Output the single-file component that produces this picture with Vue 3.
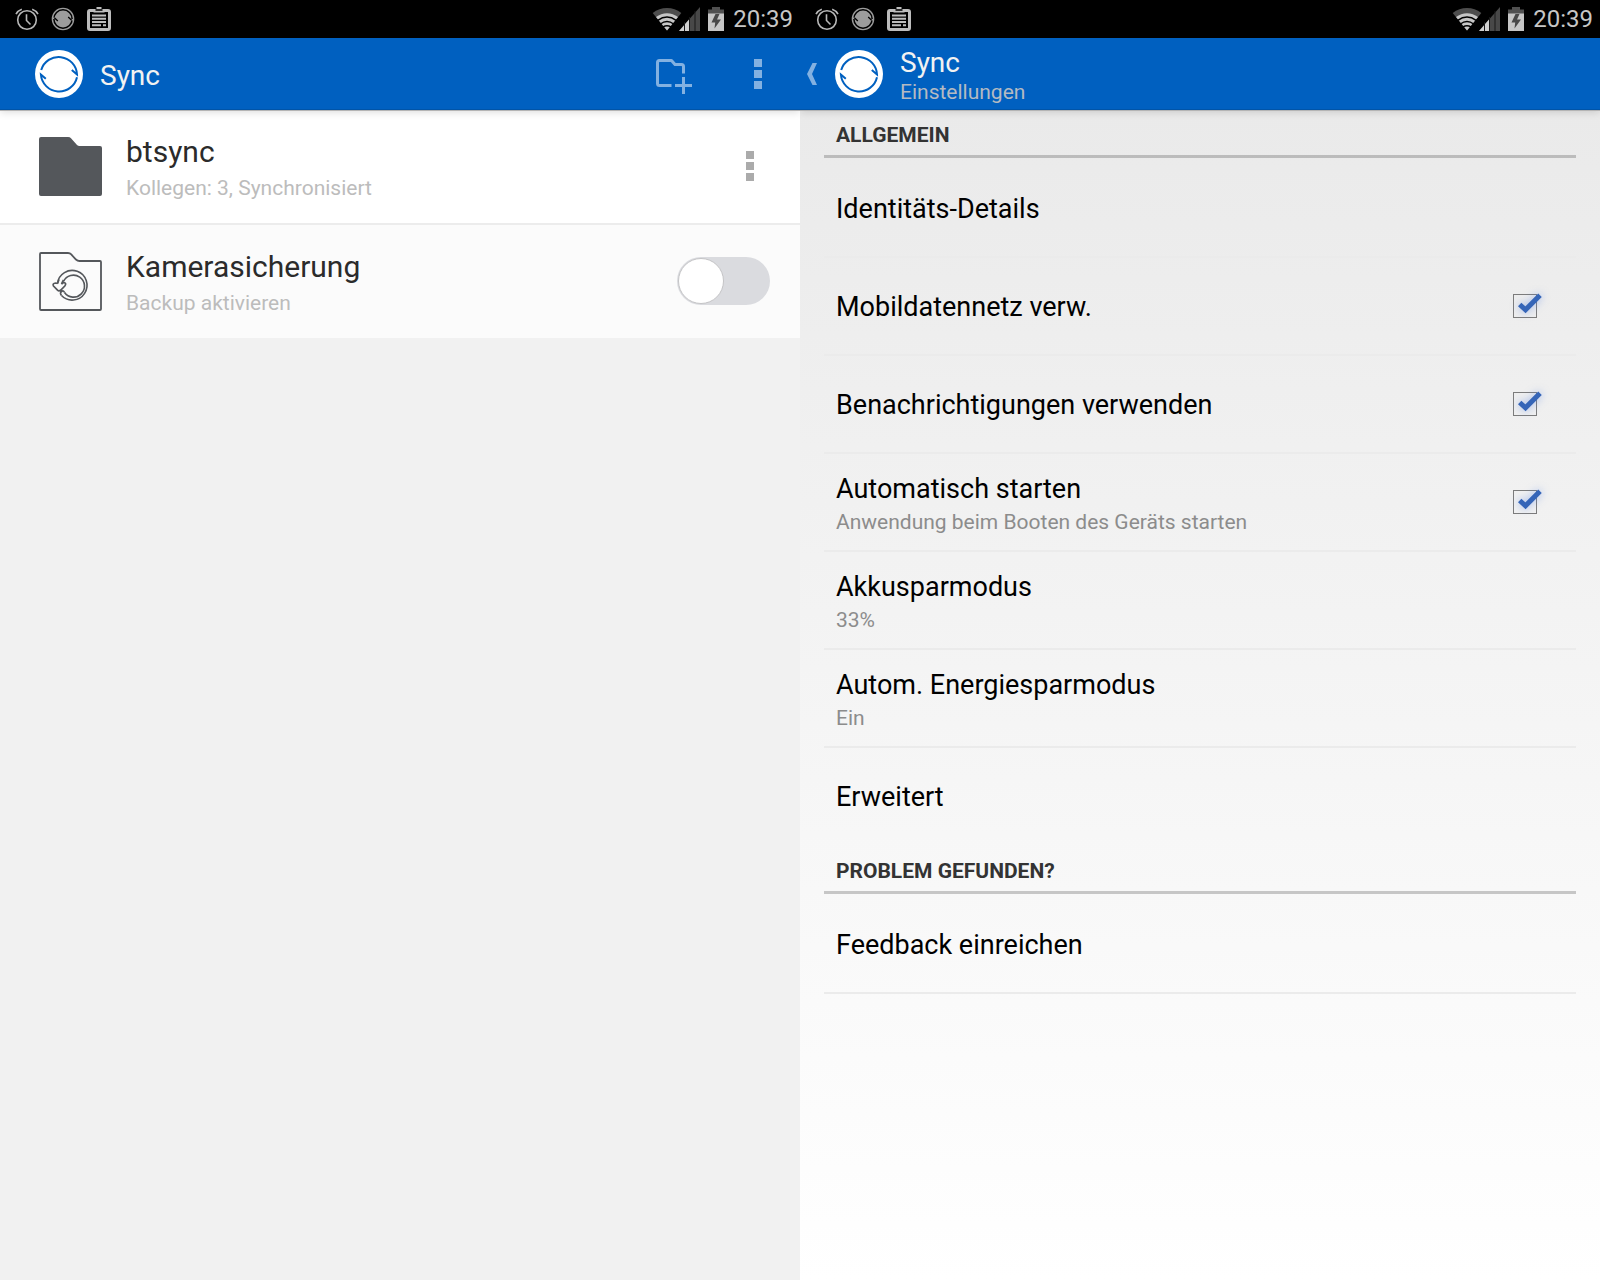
<script setup>
import { ref } from 'vue'

const screens = ['folders', 'settings']

const cameraBackup = ref(false)

const general = ref([
  { id: 'identity', title: 'Identitäts-Details' },
  { id: 'mobile', title: 'Mobildatennetz verw.', checked: true },
  { id: 'notify', title: 'Benachrichtigungen verwenden', checked: true },
  { id: 'autostart', title: 'Automatisch starten', summary: 'Anwendung beim Booten des Geräts starten', checked: true },
  { id: 'battery', title: 'Akkusparmodus', summary: '33%' },
  { id: 'saver', title: 'Autom. Energiesparmodus', summary: 'Ein' },
  { id: 'advanced', title: 'Erweitert' },
])
</script>

<template>
  <svg class="sprite" aria-hidden="true">
    <symbol id="logo" viewBox="0 0 48 48">
      <circle cx="24" cy="24" r="24" fill="#fff" />
      <g fill="none" stroke="#0060c0" stroke-width="2">
        <path d="M6.2 20A18.3 18.3 0 0 1 42 24.5L36.8 20" />
        <path d="M42 27.2A18.3 18.3 0 0 1 5.9 24.5L10.8 28.8" />
      </g>
    </symbol>
    <symbol id="status-sync" viewBox="0 0 24 24">
      <circle cx="12" cy="12" r="10.6" fill="none" stroke="#9c9c9c" stroke-width="1.4" />
      <circle cx="12" cy="12" r="8.4" fill="#9c9c9c" />
      <path d="M1.5 11.2h3M19.5 12.8h3" stroke="#9c9c9c" stroke-width="1.4" />
      <path d="M20.6 13.2L17.2 10M3.4 10.8L6.8 14" stroke="#000" stroke-width="1.3" />
    </symbol>
    <symbol id="status-alarm" viewBox="0 0 24 24">
      <g fill="none" stroke="#b8b8b8" stroke-width="1.6">
        <circle cx="12" cy="13" r="9.3" />
        <path d="M11.5 7.2v6.3l4 4" />
        <path d="M1 7.2C2.2 4.8 4 3.2 6.8 2.2M23 7.2C21.8 4.8 20 3.2 17.2 2.2" />
      </g>
    </symbol>
    <symbol id="status-clip" viewBox="0 0 24 24">
      <rect x="1.5" y="3.500" width="21" height="19" rx="1.500" fill="none" stroke="#bdbdbd" stroke-width="3" />
      <path d="M6.500 5.500V2h3V0h5v2h3v3.500z" fill="#bdbdbd" />
      <path d="M8.500 3h7" stroke="#000" stroke-width="1.600" />
      <path d="M5 8.500h14M5 11.800h14M5 15h14M5 18.200h9M16 18.200h3" stroke="#bdbdbd" stroke-width="1.900" />
    </symbol>
    <symbol id="status-wifi" viewBox="0 0 30 24">
      <path d="M15 23.500L.7 6Q7 1 15 1T29.300 6z" fill="#4d4d4d" />
      <path d="M15 23.500L4 10Q9 6.200 15 6.200T26 10z" fill="#c6c6c6" />
      <path d="M5.800 13.400Q15 6.800 24.200 13.400M8.300 17Q15 12.200 21.700 17M11 20Q15 17.500 19 20" fill="none" stroke="#000" stroke-width="1.500" />
    </symbol>
    <symbol id="status-signal" viewBox="0 0 22 24">
      <path d="M0 24L21 0v24z" fill="#484848" />
      <path d="M0 24L10 12.600V24z" fill="#d0d0d0" />
      <path d="M5.500 15v9M10.500 10v14M16 4v20" stroke="#181818" stroke-width="1" />
    </symbol>
    <symbol id="status-battery" viewBox="0 0 16 24">
      <path d="M0 7V2.500h4V0h8v2.500h4V7z" fill="#505050" />
      <path d="M0 6.500h16V24H0z" fill="#c6c6c6" />
      <path d="M7.500 7L3.500 15.500h3.700L6.500 21.500 13 12.500H9L11.500 7z" fill="#484848" />
    </symbol>
    <symbol id="tick" viewBox="0 0 32 28">
      <path d="M4.700 13.500L10.500 18.800 25 4.200" fill="none" stroke="#3565b8" stroke-width="5" />
    </symbol>
    <symbol id="dots" viewBox="0 0 8 30">
      <path d="M0 0h8v8H0zM0 11h8v8H0zM0 22h8v8H0z" fill="currentColor" />
    </symbol>
  </svg>

  <div class="screens">
    <section v-for="screen in screens" :key="screen" class="screen" :class="screen">
      <div class="status">
        <svg class="s24"><use href="#status-alarm" /></svg>
        <svg class="s24"><use href="#status-sync" /></svg>
        <svg class="s24"><use href="#status-clip" /></svg>
        <div class="system">
          <svg class="wifi"><use href="#status-wifi" /></svg>
          <svg class="signal"><use href="#status-signal" /></svg>
          <svg class="battery"><use href="#status-battery" /></svg>
          <time>20:39</time>
        </div>
      </div>

      <header class="appbar">
        <div class="up">
          <button v-if="screen === 'settings'" type="button" aria-label="Zurück">
            <svg width="10" height="22" viewBox="0 0 10 22"><path d="M5.500 0H10L5 11l5 11H5.500L0 11z" fill="#83b1e1" /></svg>
          </button>
        </div>
        <svg class="logo"><use href="#logo" /></svg>
        <div class="heading">
          <h1>Sync</h1>
          <p v-if="screen === 'settings'">Einstellungen</p>
        </div>
        <div v-if="screen === 'folders'" class="actions">
          <button class="add" type="button" aria-label="Ordner hinzufügen">
            <svg width="36" height="36" viewBox="0 0 36 36" fill="none" stroke="#83b1e1" stroke-width="3" stroke-linejoin="round">
              <path d="M15.500 26.500H3.500Q1.500 26.500 1.500 24.500V3.500Q1.500 1.500 3.500 1.500H15.500L19 5.500H25.500Q27.500 5.500 27.500 7.500V14.500" />
              <path d="M27.500 18v17M19 26.500h17" />
            </svg>
          </button>
          <button type="button" aria-label="Menü"><svg class="dots"><use href="#dots" /></svg></button>
        </div>
      </header>

      <main v-if="screen === 'folders'">
        <ul class="folders-list">
          <li class="folder">
            <svg class="folder-icon" viewBox="0 0 63 60"><path d="M2 0H29Q31 0 32 1.200L38 8Q39 9 40.500 9H61Q63 9 63 11V57Q63 59 61 59H2Q0 59 0 57V2Q0 0 2 0z" fill="#54575b" /></svg>
            <div class="folder-text">
              <h2>btsync</h2>
              <p>Kollegen: 3, Synchronisiert</p>
            </div>
            <button class="more" type="button" aria-label="Optionen"><svg class="dots"><use href="#dots" /></svg></button>
          </li>
          <li class="folder backup">
            <svg class="folder-icon" viewBox="0 0 63 60" fill="none" stroke="#54575b">
              <path d="M2 1H29Q31 1 32 2.200L37 7.500Q38.500 9 40.500 9H61Q62 9 62 10V57Q62 58 61 58H2Q1 58 1 57V2Q1 1 2 1z" stroke-width="1.800" />
              <path d="M18.500 31.500A14.800 14.800 0 1 1 22.500 43.500" stroke-width="1.600" />
              <path d="M24.500 29.500A11 11 0 1 1 25.500 40.500" stroke-width="1.600" />
              <path d="M22.500 43.500Q20.500 41 22.500 39.500T25.500 40.500M18.500 31.500L16.800 31Q13 31.500 14.500 34L18.500 38.200Q20 39.500 21.800 38L25.800 34Q28 31 24.500 30.500L22.500 32L24.500 28M18.500 31.500L20 27.500" stroke-width="1.700" />
            </svg>
            <label class="folder-text" for="camera-backup">
              <span class="name">Kamerasicherung</span>
              <span class="note">Backup aktivieren</span>
            </label>
            <input id="camera-backup" v-model="cameraBackup" class="switch" type="checkbox" role="switch" />
          </li>
        </ul>
      </main>

      <main v-else class="prefs">
        <h2>ALLGEMEIN</h2>
        <ul>
          <li v-for="item in general" :key="item.id">
            <component :is="'checked' in item ? 'label' : 'button'" class="pref" :class="{ 'two-line': item.summary }">
              <span class="pref-text">
                <span class="pref-title">{{ item.title }}</span>
                <span v-if="item.summary" class="summary">{{ item.summary }}</span>
              </span>
              <span v-if="'checked' in item" class="check">
                <input v-model="item.checked" type="checkbox" />
                <svg v-if="item.checked"><use href="#tick" /></svg>
              </span>
            </component>
          </li>
        </ul>
        <h2>PROBLEM GEFUNDEN?</h2>
        <ul class="closed">
          <li>
            <button class="pref" type="button">
              <span class="pref-text"><span class="pref-title">Feedback einreichen</span></span>
            </button>
          </li>
        </ul>
      </main>
    </section>
  </div>
</template>

<style>
body {
  margin: 0;
  background: #f1f1f1;
}
</style>

<style scoped>
* {
  box-sizing: border-box;
}
h1, h2, p, ul {
  margin: 0;
  padding: 0;
  font-weight: 400;
  list-style: none;
}
button {
  display: flex;
  padding: 0;
  border: 0;
  background: none;
  color: inherit;
  font: inherit;
  text-align: left;
}
svg {
  display: block;
  flex: none;
}
.sprite {
  position: absolute;
  width: 0;
  height: 0;
}
.screens {
  display: grid;
  grid-template-columns: 1fr 1fr;
  min-height: 100vh;
  font-family: Roboto, "Noto Sans", sans-serif;
}
.screen {
  display: flex;
  flex-direction: column;
  min-width: 0;
  background: #f1f1f1;
}
.settings {
  background: linear-gradient(#e8e8e8, #fff);
}

.status {
  display: flex;
  align-items: center;
  gap: 12px;
  height: 38px;
  padding: 0 7px 0 15px;
  background: #000;
  color: #c6c6c6;
  font-size: 24px;
  line-height: 40px;
}
.s24 {
  width: 24px;
  height: 24px;
}
.system {
  display: flex;
  align-items: center;
  margin-left: auto;
}
.wifi {
  width: 30px;
  height: 24px;
  margin-right: -3px;
}
.signal {
  width: 22px;
  height: 24px;
  margin-right: 7px;
}
.battery {
  width: 16px;
  height: 24px;
  margin-right: 9px;
}

.appbar {
  position: relative;
  display: flex;
  align-items: center;
  height: 72px;
  background: #0060c0;
  box-shadow: inset 0 -1px #0054a8, 0 1px #b4b4b4, 0 2px 8px rgba(0, 0, 0, 0.15);
  clip-path: inset(0 0 -14px 0);
}
.up {
  width: 35px;
  padding-left: 7px;
}
.logo {
  width: 48px;
  height: 48px;
  margin-right: 17px;
}
.heading {
  padding-top: 3px;
}
.heading h1 {
  color: #f2f2f2;
  font-size: 28px;
  line-height: 32px;
}
.heading p {
  color: #b4bac2;
  font-size: 21px;
  line-height: 26px;
}
.actions {
  display: flex;
  align-items: center;
  gap: 62px;
  margin-left: auto;
  padding-right: 38px;
  color: #83b1e1;
}
.add {
  padding-top: 5px;
}
.dots {
  width: 8px;
  height: 30px;
}

.folder {
  display: flex;
  align-items: center;
  height: 115px;
  padding: 0 30px 1px 39px;
  background: #fff;
  border-bottom: 2px solid #ececec;
}
.backup {
  height: 113px;
  background: #fbfbfb;
  border-bottom: 0;
}
.folder-icon {
  width: 63px;
  height: 60px;
  margin: 2px 24px 0 0;
}
.folder-text {
  flex: 1;
  padding-top: 6px;
}
.folder-text h2,
.name {
  display: block;
  color: #2b2b2b;
  font-size: 30px;
  line-height: 38px;
}
.folder-text p,
.note {
  display: block;
  color: #bcbcbc;
  font-size: 21px;
  line-height: 34px;
}
.more {
  padding-right: 16px;
  color: #ababab;
}
.switch {
  appearance: none;
  width: 93px;
  height: 48px;
  margin: 0;
  padding: 0 1px;
  display: flex;
  align-items: center;
  border-radius: 24px;
  background: #dadbdf;
}
.switch::before {
  content: "";
  width: 46px;
  height: 46px;
  box-sizing: border-box;
  border: 1px solid #c4c4c6;
  border-radius: 50%;
  background: #fff;
}
.switch:checked {
  justify-content: flex-end;
  background: #0060c0;
}

.prefs {
  padding: 0 24px;
}
.prefs h2 {
  height: 48px;
  margin-bottom: 2px;
  padding: 9px 12px 0;
  border-bottom: 3px solid rgba(0, 0, 0, 0.2);
  color: #333;
  font-size: 21px;
  font-weight: 700;
  line-height: 32px;
}
.prefs li {
  border-bottom: 2px solid #ebebeb;
}
.prefs ul:not(.closed) li:last-child {
  border-color: transparent;
}
.pref {
  display: flex;
  align-items: center;
  justify-content: space-between;
  width: 100%;
  height: 96px;
  padding: 0 39px 0 12px;
}
.pref-text {
  padding-top: 2px;
}
.pref-title {
  display: block;
  color: #000;
  font-size: 27px;
  line-height: 32px;
}
.two-line .pref-text {
  padding-top: 8px;
}
.summary {
  display: block;
  color: #8c8c8c;
  font-size: 21px;
  line-height: 34px;
}
.check {
  position: relative;
  width: 24px;
  height: 24px;
}
.check input {
  appearance: none;
  display: block;
  width: 24px;
  height: 24px;
  margin: 0;
  border: 1px solid #7c7c7c;
}
.check svg {
  position: absolute;
  left: 2px;
  top: -3px;
  width: 32px;
  height: 28px;
  overflow: visible;
  pointer-events: none;
  filter: drop-shadow(0 0 4px rgba(70, 120, 230, 0.5));
}
</style>
